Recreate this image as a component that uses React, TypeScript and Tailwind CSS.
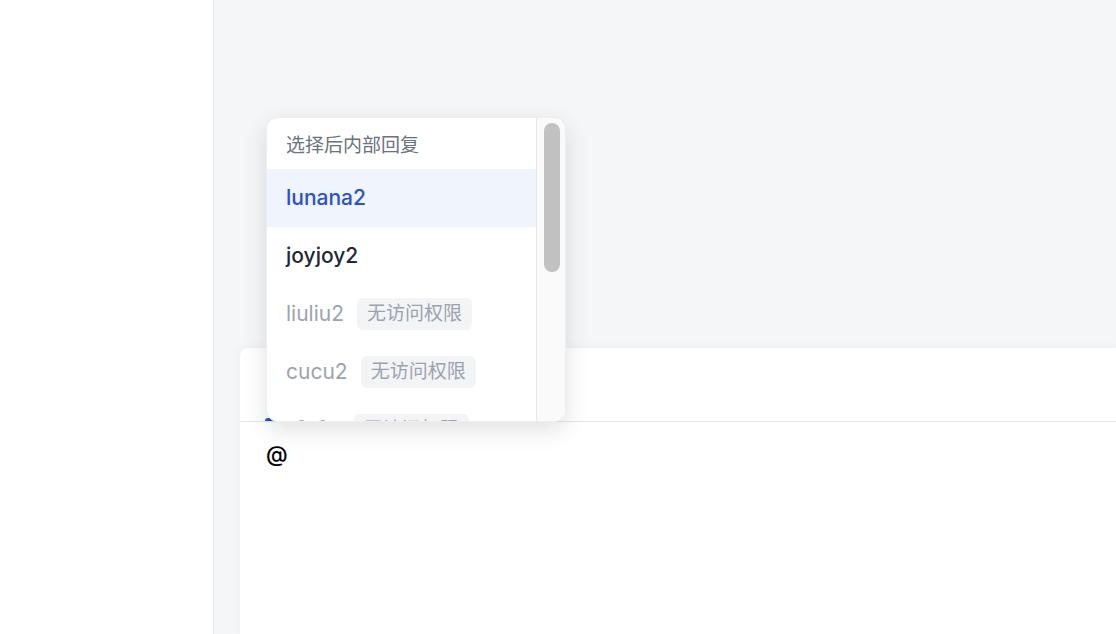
import { useState } from 'react';

type Member = { name: string; noAccess?: boolean };

const members: Member[] = [
  { name: 'lunana2' },
  { name: 'joyjoy2' },
  { name: 'liuliu2', noAccess: true },
  { name: 'cucu2', noAccess: true },
  { name: '千千2', noAccess: true },
];

const font = { fontFamily: "Inter, 'Noto Sans CJK SC', sans-serif" };

function MentionPopup() {
  const [active, setActive] = useState(0);

  return (
    <div className="absolute left-[52px] top-[117px] flex h-[305px] w-[300px] overflow-hidden rounded-xl border border-[#eceef1] bg-white shadow-[0_8px_24px_rgba(0,0,0,0.12)]">
      <div className="flex-1 overflow-hidden">
        <div className="flex h-[51px] items-center px-[19px] pt-[6px] text-[19px] text-[#6b7280]">选择后内部回复</div>
        {members.map((member, index) => (
          <button
            key={member.name}
            onMouseEnter={() => setActive(index)}
            className={`flex h-[58px] w-full items-center gap-[13px] px-[19px] text-left text-[21px] ${
              index === active
                ? 'bg-[#eff4fd] font-medium text-[#2a4fd7]'
                : member.noAccess
                  ? 'text-[#9ca3af]'
                  : 'font-medium text-[#1f2937]'
            }`}
          >
            <span>{member.name}</span>
            {member.noAccess && (
              <span className="rounded-md bg-[#f3f4f6] px-[10px] py-[2px] text-[19px] text-[#9ca3af]">无访问权限</span>
            )}
          </button>
        ))}
      </div>
      <div className="w-[29px] border-l border-[#e8e8e8] bg-[#fafafa] pl-[7px] pt-[5px]">
        <div className="h-[149px] w-[16px] rounded-full bg-[#c1c1c1]" />
      </div>
    </div>
  );
}

export default function App() {
  return (
    <div className="flex h-[634px] w-[1116px] overflow-hidden bg-white" style={font}>
      <aside className="w-[214px] shrink-0 border-r border-[#e5e7eb] bg-white" />
      <main className="relative flex flex-1 flex-col bg-[#f5f6f8] pl-[26px] pt-[348px]">
        <div className="flex flex-1 flex-col rounded-tl-lg bg-white shadow-[0_0_10px_rgba(0,0,0,0.05)]">
          <div className="flex h-[74px] items-end border-b border-[#e5e7eb] px-[25px]">
            <div className="h-[3px] w-[40px] rounded-t bg-[#2a4fd7]" />
          </div>
          <div className="px-[26px] pt-[17px] text-[22px] font-medium leading-[30px] text-black">@</div>
        </div>
        <MentionPopup />
      </main>
    </div>
  );
}
